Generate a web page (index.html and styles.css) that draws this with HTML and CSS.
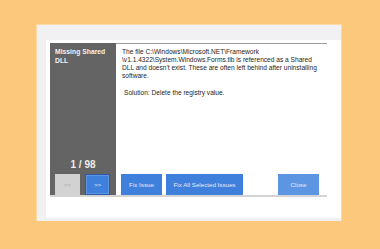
FILE: index.html
```html
<!DOCTYPE html>
<html>

<head>
    <link rel="stylesheet" href="styles.css">
</head>

<body>
    <div class="window">
        <div class="sheet">
            <div class="issue">
                <div class="side">
                    <p class="title">Missing Shared DLL</p>
                    <p class="counter">1 / 98</p>
                    <div class="nav">
                        <button class="btn prev">&lt;&lt;</button>
                        <button class="btn next">&gt;&gt;</button>
                    </div>
                </div>
                <div class="main">
                    <p class="desc">The file C:\Windows\Microsoft.NET\Framework<br>
                        \v1.1.4322\System.Windows.Forms.tlb is referenced as a Shared<br>
                        DLL and doesn't exist. These are often left behind after uninstalling<br>
                        software.</p>
                    <p class="solution">Solution: Delete the registry value.</p>
                    <div class="actions">
                        <button class="btn fix">Fix Issue</button>
                        <button class="btn fix-all">Fix All Selected Issues</button>
                        <button class="btn close">Close</button>
                    </div>
                </div>
            </div>
        </div>
    </div>
</body>

</html>
```

FILE: styles.css
```css
* {
    margin: 0;
    box-sizing: border-box;
}

body {
    background: #fcc87c;
    font-family: "Liberation Sans", Arial, sans-serif;
}

button {
    font: inherit;
    border: 0;
    padding: 0;
}

/* light grey dialog frame */
.window {
    margin: 25px 0 0 37px;
    width: 304px;
    height: 196px;
    background: #f1f1f3;
    outline: 1px solid #fddaa4;
    padding: 15px 0 3px 9px;
}

.sheet {
    background: #fff;
    height: 178px;
    padding: 3px 14px 21px 4px;
}

.issue {
    display: flex;
    height: 100%;
    border-bottom: 2px solid #d4d4d4;
}

/* dark left column */
.side {
    width: 66px;
    background: #646464;
    display: flex;
    flex-direction: column;
    padding: 4px 0 0 5px;
}

.title {
    color: #f2f2f2;
    font-weight: bold;
    font-size: 6.8px;
    line-height: 9px;
    flex: 1;
}

.counter {
    color: #ececec;
    font-weight: bold;
    font-size: 10px;
    line-height: 12px;
    text-align: center;
    padding-right: 5px;
    margin-bottom: 3px;
}

.nav {
    display: flex;
    gap: 5px;
}

.btn {
    height: 21px;
    font-size: 6.2px;
    color: #e4ecfa;
    background: #3f80dc;
}

.prev {
    width: 25px;
    background: #d2d2d2;
    color: #a8a8a8;
}

.next {
    width: 25px;
    border: 1px solid #2a5aa6;
    box-shadow: inset 0 0 0 1px #5d95e4;
}

/* description + actions */
.main {
    flex: 1;
    border-top: 1px solid #9c9c9c;
    padding: 4px 0 0 6px;
    display: flex;
    flex-direction: column;
    color: #262626;
    font-size: 6.6px;
    line-height: 8px;
}

.solution {
    margin: 9px 0 0 2px;
    flex: 1;
}

.actions {
    display: flex;
    gap: 4px;
    margin-left: -1px;
}

.fix {
    width: 41px;
}

.fix-all {
    width: 77px;
}

.close {
    width: 41px;
    margin-left: auto;
    margin-right: 8px;
    background: #5c95e2;
}
```
